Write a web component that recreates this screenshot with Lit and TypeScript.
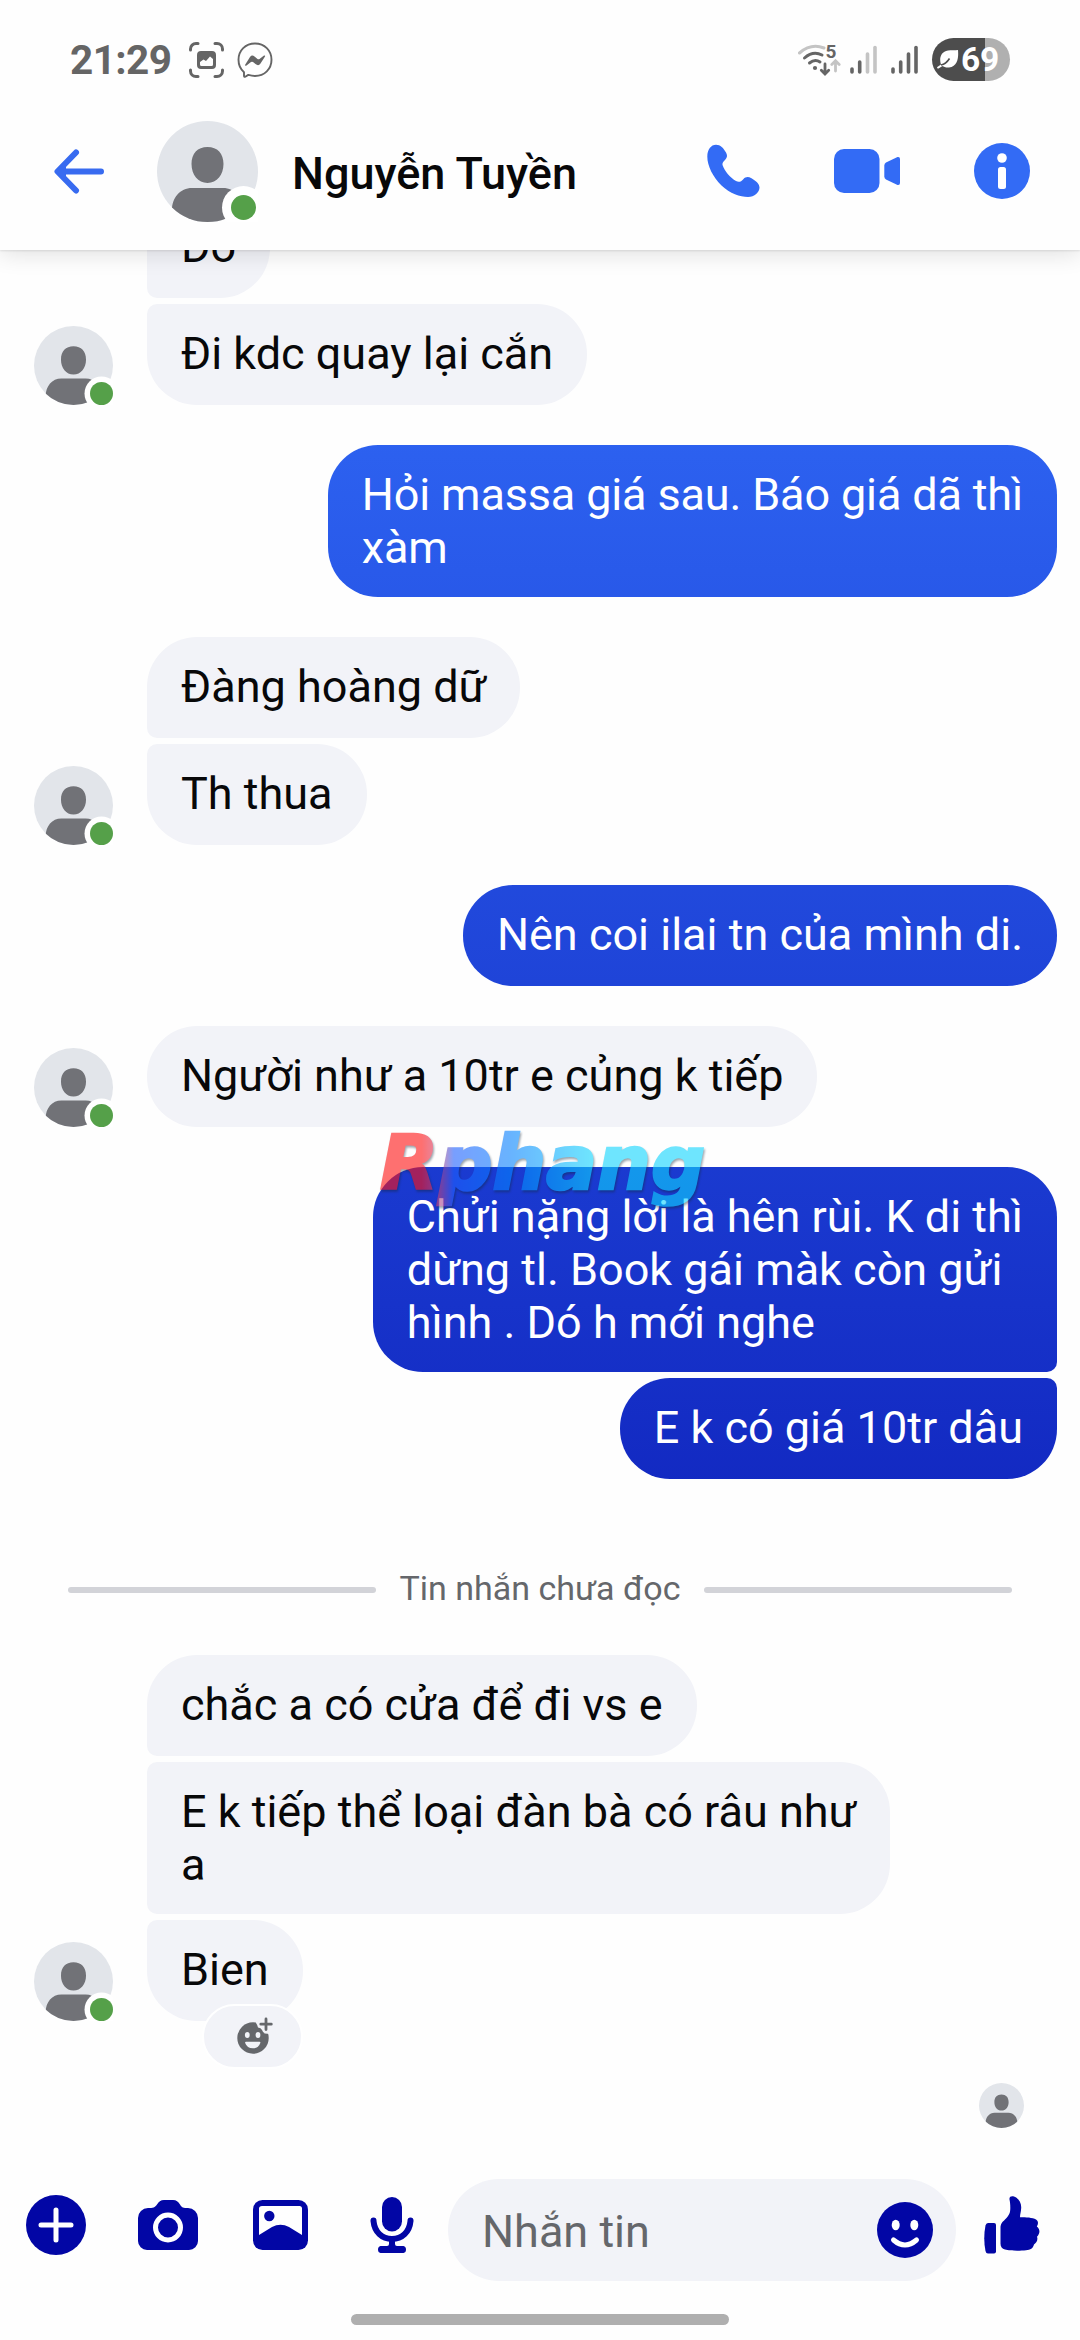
import { LitElement, html, css, svg, nothing } from "lit";
import { customElement, property } from "lit/decorators.js";
import { classMap } from "lit/directives/class-map.js";

interface Bubble {
  text: string;
  joinTop?: boolean;
  joinBottom?: boolean;
  react?: boolean;
  tight?: boolean;
}

interface Group {
  mine: boolean;
  bubbles: Bubble[];
}

const READ: Group[] = [
  {
    mine: false,
    bubbles: [
      { text: "Do", joinTop: true, joinBottom: true },
      { text: "Đi kdc quay lại cắn", joinTop: true },
    ],
  },
  {
    mine: true,
    bubbles: [{ text: "Hỏi massa giá sau. Báo giá dã thì\nxàm", tight: true }],
  },
  {
    mine: false,
    bubbles: [
      { text: "Đàng hoàng dữ", joinBottom: true },
      { text: "Th thua", joinTop: true },
    ],
  },
  { mine: true, bubbles: [{ text: "Nên coi ilai tn của mình di." }] },
  { mine: false, bubbles: [{ text: "Người như a 10tr e củng k tiếp" }] },
  {
    mine: true,
    bubbles: [
      {
        text: "Chửi nặng lời là hên rùi. K di thì\ndừng tl. Book gái màk còn gửi\nhình . Dó h mới nghe",
        joinBottom: true,
      },
      { text: "E k có giá 10tr dâu", joinTop: true },
    ],
  },
];

const UNREAD: Group[] = [
  {
    mine: false,
    bubbles: [
      { text: "chắc a có cửa để đi vs e", joinBottom: true },
      {
        text: "E k tiếp thể loại đàn bà có râu như\na",
        joinTop: true,
        joinBottom: true,
      },
      { text: "Bien", joinTop: true, react: true },
    ],
  },
];

@customElement("user-avatar")
export class UserAvatar extends LitElement {
  @property({ type: Number }) size = 79;
  @property({ type: Number }) dot = 0;
  @property({ type: Number }) ring = 0;
  @property({ type: Number }) inset = 0;

  static styles = css`
    :host {
      display: block;
      flex: none;
      line-height: 0;
    }
  `;

  render() {
    const s = this.size;
    const c = s - this.inset;
    return html`<svg width=${s} height=${s} viewBox="0 0 ${s} ${s}">
      <defs>
        <clipPath id="disc"><circle cx="50.5" cy="50.5" r="50.5" /></clipPath>
      </defs>
      <g transform="scale(${s / 101})">
        <circle cx="50.5" cy="50.5" r="50.5" fill="#e2e5ea" />
        <path
          clip-path="url(#disc)"
          fill="#717277"
          d="M50.5 26C60.500 26 66.500 32.500 66.500 43S60 62 50.500 62 34.500 53.500 34.500 43 40.500 26 50.500 26ZM35 67H66C78 67 86 77 86 89V101H15V89C15 77 23 67 35 67Z"
        />
      </g>
      ${this.dot
        ? svg`<circle cx=${c} cy=${c} r=${this.ring} fill="#fff"/><circle cx=${c} cy=${c} r=${this.dot} fill="#55a049"/>`
        : nothing}
    </svg>`;
  }
}

@customElement("status-bar")
export class StatusBar extends LitElement {
  static styles = css`
    :host {
      display: flex;
      align-items: center;
      height: 99px;
      padding: 20px 70px 0 70px;
      box-sizing: border-box;
      color: #656565;
    }
    svg {
      display: block;
      flex: none;
    }
    .time {
      font-size: 40.500px;
      font-weight: 700;
      line-height: 48px;
      letter-spacing: -0.6px;
      width: 119px;
    }
    .shot {
      margin-right: 13px;
    }
    .spacer {
      flex: 1;
    }
    .wifi {
      margin-right: 9px;
    }
    .sig {
      margin-right: 14px;
    }
    .battery {
      display: flex;
      align-items: center;
      width: 78px;
      height: 43px;
      box-sizing: border-box;
      padding-left: 5px;
      border-radius: 22px;
      background: linear-gradient(90deg, #4d4d4d 53px, #b0b0b0 53px);
      color: #fff;
      font-size: 33.500px;
      font-weight: 700;
      line-height: 43px;
      letter-spacing: -0.2px;
    }
    .leaf {
      margin-right: 2px;
    }
    .tag {
      font-size: 19px;
      font-weight: 700;
    }
  `;

  private bars(level: number) {
    return svg`${[
      [2, 23],
      [9.700, 16],
      [17.500, 8],
      [25, 1.500],
    ].map(
      ([x, y], i) =>
        svg`<path d="M${x} ${y + 1}V27" stroke=${i < level ? "#656565" : "#c4c4c4"} stroke-width="3.600" stroke-linecap="round"/>`,
    )}`;
  }

  render() {
    return html`
      <span class="time">21:29</span>
      <svg class="shot" width="35" height="36" viewBox="0 0 35 36" fill="none" stroke="#656565" stroke-width="3" stroke-linecap="round">
        <path d="M1.500 8V7A5.500 5.500 0 0 1 7 1.500H9M26 1.500H28A5.500 5.500 0 0 1 33.500 7V8M33.500 28V29A5.500 5.500 0 0 1 28 34.500H26M9 34.500H7A5.500 5.500 0 0 1 1.500 29V28" />
        <path stroke="none" fill="#656565" fill-rule="evenodd" d="M12 9H23A4 4 0 0 1 27 13V23A4 4 0 0 1 23 27H12A4 4 0 0 1 8 23V13A4 4 0 0 1 12 9ZM11 20V22.500Q11 24 12.500 24H22.500Q24 24 24 22.500V17L21 14.500 17 19 14.500 17.500Z" />
      </svg>
      <svg width="36" height="36" viewBox="0 0 36 36">
        <path fill="none" stroke="#656565" stroke-width="1.900" stroke-linejoin="round" d="M18 1.500C27.500 1.500 34.500 8.500 34.500 17.800S27.500 34 18 34C15.500 34 13.300 33.500 11.300 32.900L8.300 34.700Q7 35.200 7 33.700V30.200C3.500 27.200 1.500 22.800 1.500 17.800 1.500 8.500 8.500 1.500 18 1.500Z" />
        <path fill="#656565" d="M8 23 13 15Q15 12.500 17.500 14.500L20.500 17Q21.500 17.500 22.500 17L27 13.500Q28.500 13 28 14.500L23.500 21.500Q21.500 24.500 18.500 22L16 20Q15 19.300 14 20L9.500 23.500Q8 24.300 8 23Z" />
      </svg>
      <span class="spacer"></span>
      <svg class="wifi" width="43" height="36" viewBox="0 0 43 36" fill="none" stroke="#656565" stroke-width="3" stroke-linecap="round">
        <path stroke="#c4c4c4" d="M1.500 11Q13 1 26 6" />
        <path d="M6.500 16Q15 8.500 24 13M11.500 21Q17 16.500 22 20" />
        <circle cx="17" cy="26" r="2.100" fill="#656565" stroke="none" />
        <path stroke-width="2.800" d="M27 22V31M23.300 28.300 27 32 30.700 28.300" />
        <path stroke="#c4c4c4" stroke-width="2.800" d="M37.500 29V19M33.800 22.500 37.500 18.800 41.200 22.500" />
        <text class="tag" x="27.500" y="16" fill="#656565" stroke="none">5</text>
      </svg>
      <svg class="sig" width="27" height="30" viewBox="0 0 27 30">${this.bars(2)}</svg>
      <svg class="sig" width="27" height="30" viewBox="0 0 27 30">${this.bars(4)}</svg>
      <div class="battery">
        <svg class="leaf" width="22" height="20" viewBox="0 0 22 20">
          <path fill="#fff" d="M21 0C21.500 6 21.500 16.500 12 17.500 9 17.800 7 17 5.500 16L1.500 18.500Q-.5 18.800.3 17L4 14.500C2 9 3.500 1.500 11 .5 14 0 18 .3 21 0Z" />
          <path stroke="#4d4d4d" stroke-width="1.600" fill="none" d="M4 15Q9 14 12.500 8.500" />
        </svg>
        <span>69</span>
      </div>
    `;
  }
}

@customElement("chat-header")
export class ChatHeader extends LitElement {
  static styles = css`
    :host {
      display: flex;
      align-items: center;
      height: 151px;
      padding: 0 50px 7px 54px;
      box-sizing: border-box;
    }
    svg {
      display: block;
      flex: none;
    }
    .back {
      margin-right: 53px;
    }
    .name {
      flex: 1;
      margin-left: 34px;
      font-size: 45px;
      font-weight: 500;
      line-height: 54px;
      color: #080809;
      white-space: nowrap;
      padding-top: 5px;
    }
    .actions {
      display: flex;
      align-items: center;
      gap: 74px;
    }
  `;

  render() {
    return html`
      <svg class="back" width="50" height="45" viewBox="0 0 50 45">
        <path fill="none" stroke="#386bf0" stroke-width="6" stroke-linecap="round" stroke-linejoin="round" d="M22 3.500 3.500 22.500 22 41.500M6 22.500H47" />
        <path fill="#386bf0" d="M2 22.500 12 13V32Z" />
      </svg>
      <user-avatar size="101" dot="12.500" ring="21.500" inset="14.500"></user-avatar>
      <span class="name">Nguyễn Tuyền</span>
      <div class="actions">
        <svg width="53" height="54" viewBox="0 0 53 54">
          <path fill="#336bf5" d="M9 .7C4 .7.3 5.500.3 12.500.3 22 6 33 14.500 41.500 23 49.500 33 53 41 53 47.500 53 52.500 48 52.500 43.500 52.500 40 48.500 36.500 44.500 34.300 41 32.300 38.500 33 36.500 35 34 38 31.500 38.500 29 37 23.500 34 17.500 27 15.700 21.500 15 19.500 15.700 18.300 17.500 16.500 20.300 13.700 20.700 11.700 19 8.500 16.500 4 13.500.7 9 .7Z" />
        </svg>
        <svg width="66" height="44" viewBox="0 0 66 44">
          <rect width="45.500" height="44" rx="10" fill="#336bf5" />
          <path fill="#336bf5" d="M52 13.500 63.500 8Q66 7.500 66 10V34Q66 36.500 63.500 36L52 30.500Q50.300 29.500 50.300 27.500V16.500Q50.300 14.500 52 13.500Z" />
        </svg>
        <svg width="56" height="56" viewBox="0 0 56 56">
          <circle cx="28" cy="28" r="28" fill="#336bf5" />
          <circle cx="28" cy="15" r="4.800" fill="#fff" />
          <rect x="24" y="24" width="8" height="22" rx="2.500" fill="#fff" />
        </svg>
      </div>
    `;
  }
}

@customElement("message-group")
export class MessageGroup extends LitElement {
  @property({ attribute: false }) group!: Group;

  static styles = css`
    :host {
      display: block;
    }
    .row {
      display: flex;
      align-items: flex-end;
      gap: 34px;
      padding: 0 23px 0 34px;
    }
    .mine {
      justify-content: flex-end;
    }
    .stack {
      display: flex;
      flex-direction: column;
      align-items: flex-start;
      gap: 6px;
    }
    .mine .stack {
      align-items: flex-end;
    }
    .bubble {
      position: relative;
      box-sizing: border-box;
      min-height: 101px;
      padding: 23px 34px;
      border-radius: 50px;
      background: #f2f3f8;
      color: #080809;
      font-size: 45px;
      line-height: 53px;
      white-space: pre;
    }
    .mine .bubble {
      background: linear-gradient(#316bf8 250px, #0206a5 2150px) fixed;
      color: #fff;
    }
    .tight {
      letter-spacing: -0.150px;
    }
    .join-top {
      border-top-left-radius: 10px;
    }
    .join-bottom {
      border-bottom-left-radius: 10px;
    }
    .mine .join-top {
      border-top-left-radius: 50px;
      border-top-right-radius: 10px;
    }
    .mine .join-bottom {
      border-bottom-left-radius: 50px;
      border-bottom-right-radius: 10px;
    }
    .react {
      position: absolute;
      left: 55px;
      top: 84px;
      width: 97px;
      height: 61px;
      box-sizing: content-box;
      border: 2px solid #fff;
      border-radius: 33px;
      background: #f2f3f8;
      display: flex;
      align-items: center;
      justify-content: center;
    }
    .react svg {
      display: block;
      margin: 0 0 3px 4px;
    }
  `;

  render() {
    const { mine, bubbles } = this.group;
    return html`<div class=${classMap({ row: true, mine })}>
      ${mine ? nothing : html`<user-avatar size="79" dot="11.500" ring="17" inset="11.500"></user-avatar>`}
      <div class="stack">
        ${bubbles.map(
          (b) =>
            html`<div
              class=${classMap({
                bubble: true,
                tight: !!b.tight,
                "join-top": !!b.joinTop,
                "join-bottom": !!b.joinBottom,
              })}
            >${b.text}${b.react
                ? html`<div class="react"><svg width="36" height="37" viewBox="0 0 36 37">
                      <circle cx="16" cy="21" r="15.700" fill="#65676b" />
                      <path fill="#f2f3f8" d="M19 0V6Q20.500 8 21 10.500 24 10.500 25 13 26 16 28 16.500L33 17V0Z" />
                      <path stroke="#65676b" stroke-width="2.800" stroke-linecap="round" d="M29 2V12.500M23.800 7.200H34.300" />
                      <ellipse cx="10.300" cy="18" rx="2.400" ry="3" fill="#f2f3f8" />
                      <ellipse cx="21" cy="18" rx="2.400" ry="3" fill="#f2f3f8" />
                      <path fill="#f2f3f8" d="M9 24.700H22.500Q23.700 24.700 23.300 26 21.500 31.300 15.800 31.300T8.200 26Q7.800 24.700 9 24.700Z" />
                    </svg></div>`
                : nothing}</div>`,
        )}
      </div>
    </div>`;
  }
}

@customElement("chat-composer")
export class ChatComposer extends LitElement {
  static styles = css`
    :host {
      display: grid;
      grid-template-columns: repeat(4, 112px) 508px 112px;
      height: 102px;
    }
    svg {
      display: block;
      fill: #0206a5;
    }
    .cell {
      display: flex;
      align-items: center;
      justify-content: center;
      padding-bottom: 10px;
    }
    .field {
      display: flex;
      align-items: center;
      justify-content: space-between;
      padding: 0 23px 0 34px;
      border-radius: 51px;
      background: #f2f3f8;
      color: #65676b;
      font-size: 45px;
      line-height: 54px;
    }
    .hint {
      padding-top: 3px;
    }
  `;

  render() {
    return html`
      <div class="cell">
        <svg width="60" height="60" viewBox="0 0 60 60">
          <circle cx="30" cy="30" r="30" />
          <path stroke="#fff" stroke-width="5" stroke-linecap="round" d="M30 15V45M15 30H45" />
        </svg>
      </div>
      <div class="cell">
        <svg width="60" height="50" viewBox="0 0 60 50">
          <path d="M10 8C15 8 17 7.500 19 4.500 21 1.500 22.500 0 26 0H35C38.500 0 40 1.500 42 4.500 43.500 7.500 45.500 8 50 8A10 10 0 0 1 60 18V41A9 9 0 0 1 51 50H9A9 9 0 0 1 0 41V18A10 10 0 0 1 10 8Z" />
          <circle cx="30" cy="27.500" r="12.500" stroke="#fff" stroke-width="5" />
        </svg>
      </div>
      <div class="cell">
        <svg width="55" height="50" viewBox="0 0 55 50">
          <rect width="55" height="50" rx="9.500" />
          <path fill="#fff" d="M9 6H46.500Q49 6 49 8.500V35L36 27Q27.500 22.500 19 27L6 35V8.500Q6 6 9 6Z" />
          <circle cx="16.300" cy="16" r="5.200" />
        </svg>
      </div>
      <div class="cell">
        <svg width="44" height="57" viewBox="0 0 44 57">
          <rect x="12" y="0" width="20" height="34.500" rx="10" />
          <path fill="none" stroke="#0206a5" stroke-width="6" stroke-linecap="round" d="M3.500 23.500V24C4.500 35 12 42 22 42S39.500 35 40.500 24V23.500" />
          <path d="M19 43H25V47Q25 49 27 49H33.500Q36 49.500 36 52.500T33.500 56H10.500Q8 55.500 8 52.500T10.500 49H17Q19 49 19 47Z" />
        </svg>
      </div>
      <div class="field">
        <span class="hint">Nhắn tin</span>
        <svg width="56" height="56" viewBox="0 0 56 56">
          <circle cx="28" cy="28" r="28" />
          <ellipse cx="18.700" cy="23" rx="4" ry="5.300" fill="#fff" />
          <ellipse cx="37.300" cy="23" rx="4" ry="5.300" fill="#fff" />
          <path fill="none" stroke="#fff" stroke-width="5" stroke-linecap="round" d="M16.500 38Q28 48 39.500 38" />
        </svg>
      </div>
      <div class="cell">
        <svg width="56" height="58" viewBox="0 0 56 58">
          <path d="M4 27H10Q12 27 12 29V55.500Q12 57.500 10 57.500H4Q2 57.500 1.500 55-1 42 1.500 29.500 2 27 4 27Z" />
          <path d="M25.500 3.500C25 .5 27.500-.3 30 .5 34.500 2 37.500 6.500 37.200 12 37 16 36 18 36 21.300 42 21.300 48.500 21.500 52 23.500 54.500 25 54.500 28 52.800 30.500 56 33 56.500 37 53 40.700 54.200 44 52.500 47 50 48.500 49 52.500 46.500 53.700 42 54.200 36 54.900 26 54.900 21 53.500 18 52.500 16.500 51 16.500 47.500V32C16.500 27.500 18.500 26 21 23.500 25.500 19 26.300 16.500 26.300 12 26.300 8 26 6 25.500 3.500Z" />
        </svg>
      </div>
    `;
  }
}

@customElement("app-root")
export class AppRoot extends LitElement {
  static styles = css`
    :host {
      position: relative;
      display: flex;
      flex-direction: column;
      width: 1080px;
      height: 2340px;
      overflow: hidden;
      background: #fefefe;
      font-family: Roboto, "Noto Sans", sans-serif;
    }
    .top {
      position: relative;
      z-index: 1;
      height: 250px;
      flex: none;
      background: #fefefe;
      box-shadow:
        0 1px 2px rgba(0, 0, 0, 0.1),
        0 4px 22px rgba(0, 0, 0, 0.12);
    }
    .messages {
      flex: 1;
      min-height: 0;
      overflow: hidden;
    }
    .thread {
      display: flex;
      flex-direction: column;
      gap: 40px;
    }
    .earlier {
      margin-top: -53px;
    }
    .unread {
      display: flex;
      align-items: center;
      gap: 24px;
      height: 60px;
      margin: 79px 68px 37px;
      color: #65676b;
      font-size: 34px;
      line-height: 60px;
      white-space: nowrap;
    }
    .rule {
      flex: 1;
      height: 6px;
      border-radius: 3px;
      background: #d2d3d8;
      margin-top: 4px;
    }
    .seen {
      display: flex;
      justify-content: flex-end;
      margin: 62px 56px 0 0;
    }
    .nav {
      display: flex;
      justify-content: center;
      height: 26px;
      padding-top: 33px;
    }
    .handle {
      width: 378px;
      height: 11px;
      border-radius: 6px;
      background: #afafaf;
    }
    .mark {
      position: absolute;
      left: 373px;
      top: 1116px;
      z-index: 2;
      opacity: 0.6;
    }
    .brand {
      font-family: "DejaVu Sans", sans-serif;
      font-size: 75px;
      font-weight: 700;
      font-style: italic;
      stroke-width: 2.500px;
      stroke-linejoin: miter;
      filter: drop-shadow(1px 2px 1px rgba(20, 40, 60, 0.7));
    }
  `;

  render() {
    return html`
      <div class="top">
        <status-bar></status-bar>
        <chat-header></chat-header>
      </div>
      <div class="messages">
        <div class="thread earlier">
          ${READ.map((g) => html`<message-group .group=${g}></message-group>`)}
        </div>
        <div class="unread">
          <span class="rule"></span><span>Tin nhắn chưa đọc</span><span class="rule"></span>
        </div>
        <div class="thread">
          ${UNREAD.map((g) => html`<message-group .group=${g}></message-group>`)}
        </div>
        <div class="seen"><user-avatar size="45"></user-avatar></div>
      </div>
      <chat-composer></chat-composer>
      <div class="nav"><span class="handle"></span></div>
      <svg class="mark" width="345" height="100" viewBox="0 0 345 100">
        <defs>
          <linearGradient id="tint" gradientUnits="userSpaceOnUse" x1="10" x2="332" y1="0" y2="0">
            <stop offset="0.120" stop-color="#ff1212" />
            <stop offset="0.170" stop-color="#d04070" />
            <stop offset="0.220" stop-color="#2060ff" />
            <stop offset="0.400" stop-color="#0583ff" />
            <stop offset="0.650" stop-color="#0fd5ff" />
          </linearGradient>
        </defs>
        <text class="brand" x="7" y="73" textLength="325" lengthAdjust="spacingAndGlyphs" fill="url(#tint)" stroke="url(#tint)">Rphang</text>
      </svg>
    `;
  }
}
